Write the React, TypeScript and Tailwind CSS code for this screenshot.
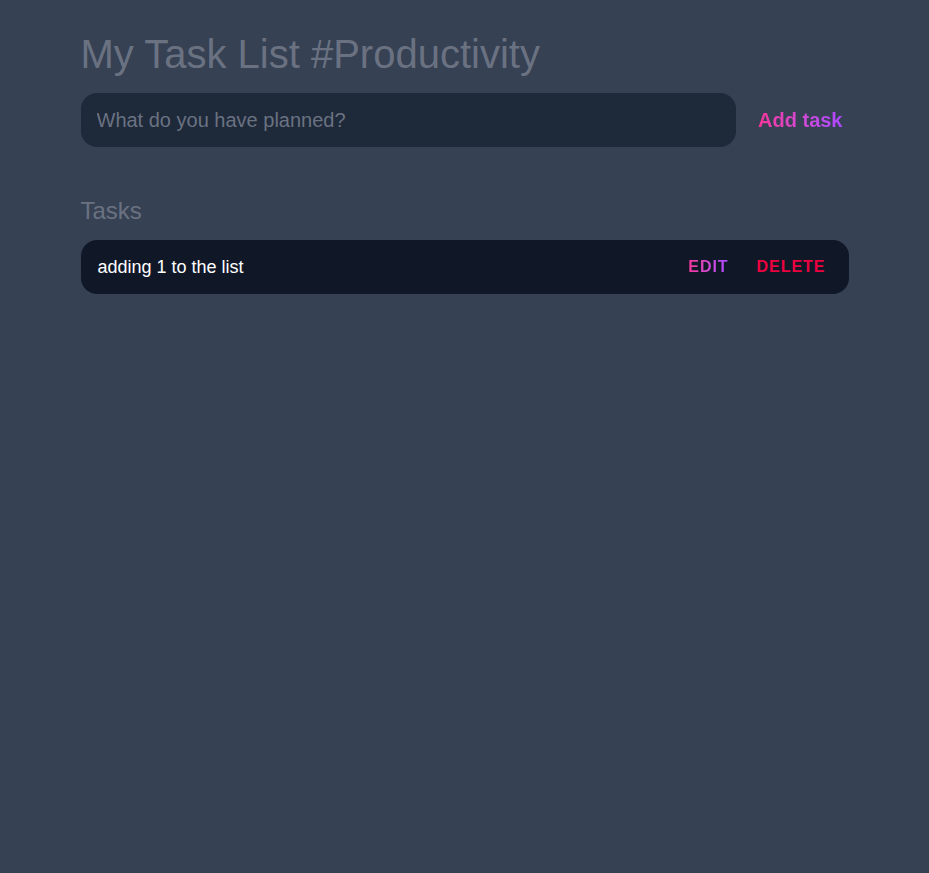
export default function App() {
  return (
    <div className="min-h-screen bg-gray-700 font-['Liberation_Sans',Arial,sans-serif]">
      <div className="max-w-3xl mx-auto pt-8">
        <h1 className="text-[40px] leading-[44px] text-gray-500">My Task List #Productivity</h1>
        <form className="flex items-center mt-[17px]" onSubmit={(e) => e.preventDefault()}>
          <input
            className="flex-1 h-[54px] rounded-2xl bg-gray-800 px-4 text-xl text-white placeholder-gray-500 outline-none"
            placeholder="What do you have planned?"
          />
          <button className="ml-[22px] mr-[6px] text-xl font-bold bg-gradient-to-r from-pink-500 to-purple-500 bg-clip-text text-transparent">
            Add task
          </button>
        </form>
        <h2 className="mt-[48px] text-2xl text-gray-500">Tasks</h2>
        <div className="mt-[13px] flex items-center h-[54px] rounded-2xl bg-gray-900 pl-[17px] pr-[23px]">
          <span className="flex-1 text-lg text-white">adding 1 to the list</span>
          <button className="mr-[28px] font-bold uppercase tracking-[0.06em] bg-gradient-to-r from-pink-500 to-purple-500 bg-clip-text text-transparent">
            Edit
          </button>
          <button className="font-bold uppercase tracking-[0.06em] text-rose-600">Delete</button>
        </div>
      </div>
    </div>
  );
}
